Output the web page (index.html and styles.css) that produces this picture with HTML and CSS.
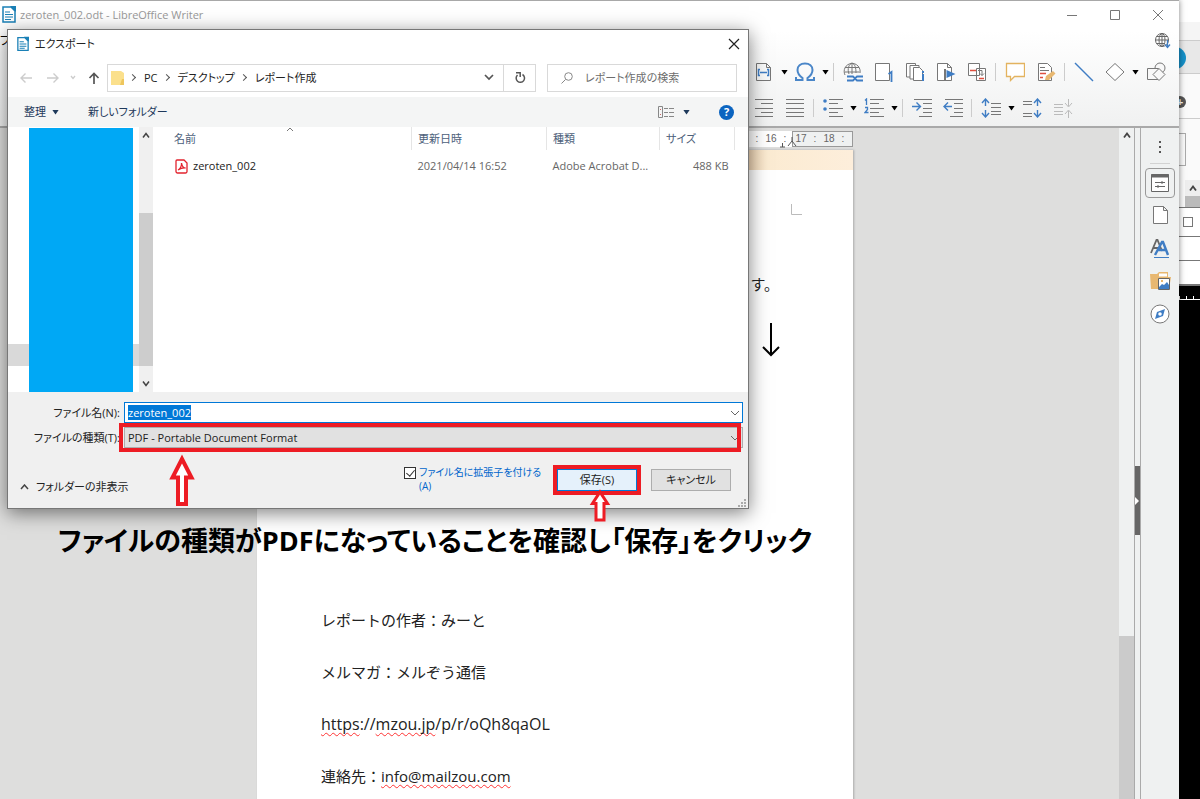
FILE: index.html
```html
<!DOCTYPE html>
<html lang="ja">
  <head>
    <meta charset="utf-8">
    <title>zeroten_002.odt - LibreOffice Writer</title>
    <link rel="stylesheet" href="styles.css">
  </head>
  <body>
    <div class="writer">
      <header class="titlebar">
        <svg class="doc-icon" width="14" height="17" viewBox="0 0 14 17"><path d="M1 1h8l4 4v11H1z" fill="#fff" stroke="#1a80b6" stroke-width="1.5"/><path d="M8 0h6v6z" fill="#1a80b6"/><path d="M3 6h5M3 8.500h8M3 11h8M3 13.500h6" stroke="#1a80b6" stroke-width="1.200"/></svg>
        <span class="titlebar-text">zeroten_002.odt - LibreOffice Writer</span>
        <div class="window-buttons">
          <button aria-label="最小化"><svg width="12" height="12"><path d="M1 6.500h10" stroke="#777"/></svg></button>
          <button aria-label="最大化"><svg width="12" height="12"><path d="M1.500 1.500h9v9h-9z" stroke="#777" fill="none"/></svg></button>
          <button aria-label="閉じる"><svg width="12" height="12"><path d="M1 1l10 10M11 1L1 11" stroke="#777"/></svg></button>
        </div>
      </header>
      <div class="menubar">
        <span class="menu-item">フ</span>
        <button class="tool" aria-label="更新"><svg width="20" height="20" viewBox="0 0 20 20" fill="none" stroke="#666"><circle cx="9" cy="9" r="6.500"/><ellipse cx="9" cy="9" rx="3" ry="6.500"/><path d="M2.500 9h13M9 2.500v13M3.500 5.500h11M3.500 12.500h8"/><path d="M14.500 9v7M12 13.500l2.500 3 2.500-3" stroke="#3f7dc4" stroke-width="1.300"/></svg></button>
      </div>
      <div class="toolbar">
        <button class="tool" aria-label="フィールド"><svg width="20" height="20" viewBox="0 0 20 20" fill="none" stroke="#777"><path d="M2.500 1.500h10l4 4v13h-14zM12.500 1.500v4h4"/><path d="M6 7.500H4.500v6H6M13 7.500h1.500v6H13M6 10.500h7" stroke="#3f7dc4" stroke-width="1.500"/></svg></button>
        <i class="caret"></i>
        <button class="tool" aria-label="特殊文字"><svg width="20" height="20" viewBox="0 0 20 20" fill="none"><path d="M1 15v3h6.500v-2C4 13.500 2.500 11 2.500 8c0-4 3-6.500 7.500-6.500S17.500 4 17.500 8c0 3-1.500 5.500-5 8v2H19v-3" stroke="#4a86c8" stroke-width="2"/></svg></button>
        <i class="caret"></i>
        <i class="sep"></i>
        <button class="tool" aria-label="ハイパーリンク"><svg width="20" height="20" viewBox="0 0 20 20" fill="none" stroke="#777"><path d="M2 13A8 8 0 1 1 17 11M6 12C4 7 6 2 9 1c3 1 4 5 4 10M9 1v11M2 5.500h14M1.500 10h15"/><path d="M4 14.500h6l4 4h6M4 18.500h6l4-4h6" stroke="#3f7dc4" stroke-width="1.800"/></svg></button>
        <button class="tool" aria-label="脚注"><svg width="20" height="20" viewBox="0 0 20 20" fill="none" stroke="#777"><path d="M1.500 1.500h14v17h-14z" fill="#fff"/><path d="M14.500 12l3-2v10" stroke="#3f7dc4" stroke-width="1.800"/></svg></button>
        <button class="tool" aria-label="文末脚注"><svg width="20" height="20" viewBox="0 0 20 20" fill="none" stroke="#777"><path d="M5 15H1.500V1.500h9V4M8 17H5V3.500h9V6" fill="#fff"/><path d="M8.500 5.500h6l3 3v10h-9z" fill="#fff"/><path d="M18 12v7M18 9v2" stroke="#3f7dc4" stroke-width="2"/></svg></button>
        <button class="tool" aria-label="ブックマーク"><svg width="20" height="20" viewBox="0 0 20 20" fill="none" stroke="#777"><path d="M1.500 1.500h10l4 4v13h-14zM11.500 1.500v4h4" fill="#fff"/><path d="M9 7v12" stroke-width="2"/><path d="M10.500 8v8l9-4z" fill="#3f7dc4" stroke="none"/></svg></button>
        <button class="tool" aria-label="相互参照"><svg width="20" height="20" viewBox="0 0 20 20" fill="none" stroke="#777"><path d="M1.500 1.500h11v12h-11zM9.500 6.500h9v12h-9z" fill="#fff"/><path d="M3 8.500h6M12 16.500h5" stroke="#e05040" stroke-width="1.500"/><path d="M11 8.500h4v5M13 11.500l2 2 2-2"/></svg></button>
        <i class="sep"></i>
        <button class="tool" aria-label="コメント"><svg width="20" height="20" viewBox="0 0 20 20"><path d="M1.500 1.500h18v13H9.500L5.500 18.500v-4h-4z" fill="#fff" stroke="#e3b35f" stroke-width="1.300"/></svg></button>
        <button class="tool" aria-label="変更の記録"><svg width="20" height="20" viewBox="0 0 20 20" fill="none" stroke="#777"><path d="M2.500 1.500h9l4 4v13h-13z" fill="#fff"/><path d="M4 5.500h5M4 8.500h9"/><path d="M4 11.500h6M4 15.500h3" stroke="#e05040" stroke-width="1.500"/><path d="M9 18l1-4 7-5 2.500 2.500L13 18z" fill="#e8b871" stroke="none"/></svg></button>
        <i class="sep"></i>
        <button class="tool" aria-label="線"><svg width="20" height="20" viewBox="0 0 20 20"><path d="M1 1l18 18" stroke="#3f7dc4" stroke-width="1.400"/></svg></button>
        <button class="tool" aria-label="図形"><svg width="20" height="20" viewBox="0 0 20 20"><path d="M10 1.500l9 8.500-9 8.500L1 10z" fill="#fff" stroke="#777"/></svg></button>
        <i class="caret"></i>
        <button class="tool" aria-label="図形描画"><svg width="20" height="20" viewBox="0 0 20 20" fill="#f8f8f8" stroke="#777"><circle cx="14" cy="6" r="5"/><path d="M1.500 6.500h11v11h-11z"/><path d="M13 6.500l6 6-6 6-6-6z"/></svg></button>
      </div>
      <div class="toolbar toolbar-format">
        <button class="tool" aria-label="右揃え"><svg width="20" height="20"><path d="M1 1.500h18M7 5.500h12M1 10.500h18M7 14.500h12M1 18.500h18" stroke="#777"/></svg></button>
        <button class="tool" aria-label="両端揃え"><svg width="20" height="20"><path d="M1 1.500h18M1 5.500h18M1 10.500h18M1 14.500h18M1 18.500h18" stroke="#777"/></svg></button>
        <i class="sep"></i>
        <button class="tool" aria-label="箇条書き"><svg width="20" height="20"><path d="M6 1.500h14M6 5.500h9M6 10.500h14M6 14.500h9M6 18.500h14" stroke="#777"/><circle cx="2" cy="3" r="1.800" fill="#3f7dc4"/><circle cx="2" cy="11" r="1.800" fill="#3f7dc4"/></svg></button>
        <i class="caret"></i>
        <button class="tool" aria-label="番号付け"><svg width="20" height="20"><path d="M6 1.500h14M6 5.500h9M6 10.500h14M6 14.500h9M6 18.500h14" stroke="#777"/><path d="M1 2.500L2.500 1v6M1 9.500h2.500v2L1 14.500h3.500" fill="none" stroke="#3f7dc4" stroke-width="1.300"/></svg></button>
        <i class="caret"></i>
        <i class="sep"></i>
        <button class="tool" aria-label="インデントを増やす"><svg width="20" height="20"><path d="M2 1.500h18M11 5.500h9M11 10.500h9M11 14.500h9M7 18.500h13" stroke="#777"/><path d="M0 8.500h8M4.500 4.500l4 4-4 4" fill="none" stroke="#3f7dc4" stroke-width="1.400"/></svg></button>
        <button class="tool" aria-label="インデントを減らす"><svg width="20" height="20"><path d="M2 1.500h18M11 5.500h9M11 10.500h9M11 14.500h9M7 18.500h13" stroke="#777"/><path d="M9 8.500H1M5 4.500l-4 4 4 4" fill="none" stroke="#3f7dc4" stroke-width="1.400"/></svg></button>
        <i class="sep"></i>
        <button class="tool" aria-label="行間"><svg width="20" height="20"><path d="M10 5.500h10M10 9.500h10M10 13.500h10M10 16.500h10" stroke="#777"/><path d="M4.500 8V1M1 5l3.500-4L8 5M4.500 12v7M1 15l3.500 4L8 15" fill="none" stroke="#3f7dc4" stroke-width="1.400"/></svg></button>
        <i class="caret"></i>
        <button class="tool" aria-label="段落間隔を増やす"><svg width="20" height="20"><path d="M1 3.500h9M1 6.500h9M1 15.500h9M1 18.500h9" stroke="#777"/><path d="M15.500 8V1M12 5l3.500-4L19 5M15.500 12v7M12 15l3.500 4 3.500-4" fill="none" stroke="#3f7dc4" stroke-width="1.400"/></svg></button>
        <button class="tool" aria-label="段落間隔を減らす"><svg width="20" height="20"><path d="M1 6.500h9M1 9.500h9M1 13.500h9M1 16.500h9M15.500 1v7M12 5l3.500 4L19 5M15.500 20v-7M12 16l3.500-4 3.500 4" fill="none" stroke="#bbb"/></svg></button>
      </div>

      <main class="workspace">
        <div class="canvas">
          <div class="ruler">
            <div class="ruler-body"><span>:</span><span>16</span><span>:</span></div>
            <div class="ruler-margin"><span>17</span><span>:</span><span>18</span><span>:</span></div>
            <svg class="ruler-mark" width="18" height="12" viewBox="0 0 18 12"><path d="M3.500 7v4M1 11h5M9 10l4-5 4 5M13 5V1" fill="none" stroke="#555"/></svg>
          </div>
          <article class="page">
            <div class="page-banner"></div>
            <svg class="page-corner" width="12" height="12"><path d="M.5 0v10.500H11" fill="none" stroke="#bbb"/></svg>
            <p class="page-end">す。</p>
            <svg class="page-arrow" width="20" height="36" viewBox="0 0 20 36"><path d="M10 1v32M2 25l8 8 8-8" fill="none" stroke="#000" stroke-width="2"/></svg>
            <div class="page-text">
              <p>レポートの作者：みーと</p>
              <p>メルマガ：メルぞう通信</p>
              <p class="page-url"><span class="typo">https</span>://<span class="typo">mzou.jp</span>/p/r/oQh8qaOL</p>
              <p>連絡先：<span class="typo">info@mailzou.com</span></p>
            </div>
          </article>
        </div>
        <div class="scrollbar">
          <svg width="8" height="7"><path d="M1 5.500l3-4 3 4" fill="none" stroke="#444" stroke-width="1.800"/></svg>
          <div class="scrollbar-thumb"></div>
        </div>
        <div class="splitter"><div class="splitter-handle"></div></div>
        <nav class="sidebar">
          <button class="side-menu" aria-label="メニュー"><svg width="4" height="14" fill="#555"><path d="M1 1h2v2H1zM1 6h2v2H1zM1 11h2v2H1z"/></svg></button>
          <button class="side-btn active" aria-label="プロパティ"><svg width="20" height="20" viewBox="0 0 20 20" fill="none" stroke="#666"><path d="M1.500 1.500h17v17h-17z" fill="#fff"/><path d="M1 3h18" stroke-width="3"/><path d="M5 9.500h10M5 13.500h10M12 8v3M8 12v3"/></svg></button>
          <button class="side-btn" aria-label="ページ"><svg width="20" height="20" viewBox="0 0 20 20"><path d="M3.500 1.500h10l4 4v13h-14zM13.500 1.500v4h4" fill="#fff" stroke="#777"/></svg></button>
          <button class="side-btn" aria-label="スタイル"><svg width="20" height="20" viewBox="0 0 20 20" fill="none"><path d="M1 15L6.500 2h1L12 13M3 10h7" stroke="#666" stroke-width="1.800"/><path d="M5 17L12 4h1l5 13M8 12h8" stroke="#3f7dc4" stroke-width="2.400"/><path d="M4 19.500h15" stroke="#3f7dc4"/></svg></button>
          <button class="side-btn" aria-label="ギャラリー"><svg width="22" height="20" viewBox="0 0 22 20"><path d="M1 3h7l2-2h9v5h3l-2 12H2z" fill="#e8b871"/><path d="M10 2.500h8v3h-8z" fill="#fff"/><path d="M9.500 7.500h11v11h-11z" fill="#fff" stroke="#666"/><path d="M10 16l3-3 2 1 3-3 2 3v4H10z" fill="#3f7dc4"/><circle cx="13" cy="10" r="1" fill="#e3a040"/></svg></button>
          <button class="side-btn" aria-label="ナビゲーター"><svg width="20" height="20" viewBox="0 0 20 20"><circle cx="10" cy="10" r="9" fill="#fff" stroke="#777"/><path d="M15 5l-2 7-8 3 2-7z" fill="#3f7dc4"/><circle cx="10" cy="10" r="1.800" fill="#fff"/></svg></button>
        </nav>
      </main>

      <form class="dialog" role="dialog" aria-label="エクスポート">
        <div class="dialog-title">
          <svg class="doc-icon" width="12" height="16" viewBox="0 0 14 17"><path d="M1 1h8l4 4v11H1z" fill="#fff" stroke="#1a80b6" stroke-width="1.500"/><path d="M8 0h6v6z" fill="#1a80b6"/><path d="M3 6h5M3 8.500h8M3 11h8M3 13.500h6" stroke="#1a80b6" stroke-width="1.200"/></svg>
          <span>エクスポート</span>
          <button type="button" class="dialog-close" aria-label="閉じる"><svg width="12" height="12"><path d="M1 1l10 10M11 1L1 11" stroke="#222" stroke-width="1.200"/></svg></button>
        </div>
        <div class="location">
          <button type="button" aria-label="戻る"><svg width="12" height="12"><path d="M12 6H1M5.500 1.500L1 6l4.500 4.500" fill="none" stroke="#ccc" stroke-width="1.400"/></svg></button>
          <button type="button" aria-label="進む"><svg width="12" height="12"><path d="M0 6h11M6.500 1.500L11 6l-4.500 4.500" fill="none" stroke="#ccc" stroke-width="1.400"/></svg></button>
          <button type="button" class="history" aria-label="履歴"><svg width="6" height="5"><path d="M1 1l2 2.500L5 1" fill="none" stroke="#ccc" stroke-width="1.300"/></svg></button>
          <button type="button" aria-label="上へ"><svg width="12" height="12"><path d="M6 12V1.500M1.500 6L6 1.500 10.500 6" fill="none" stroke="#555" stroke-width="1.700"/></svg></button>
          <div class="address">
            <svg width="13" height="16"><path d="M0 1h10l3 2v12H0z" fill="#fbe08c"/><path d="M11 9h2v6h-4z" fill="#eec65d"/></svg>
            <i class="crumb-arrow"></i><a href="#">PC</a>
            <i class="crumb-arrow"></i><a href="#">デスクトップ</a>
            <i class="crumb-arrow"></i><a href="#">レポート作成</a>
            <svg class="address-open" width="10" height="7"><path d="M1 1l4 4 4-4" fill="none" stroke="#555" stroke-width="1.700"/></svg>
          </div>
          <button type="button" class="refresh" aria-label="更新"><svg width="12" height="12"><path d="M8.500 2.500A4.200 4.200 0 1 1 3.500 3M2 .8h4.200V5" fill="none" stroke="#555" stroke-width="1.500"/></svg></button>
          <label class="search">
            <svg width="12" height="12"><circle cx="7.500" cy="4.500" r="3.800" fill="none" stroke="#888"/><path d="M4.500 7.500L.5 11.500" stroke="#888"/></svg>
            <input type="search" placeholder="レポート作成の検索">
          </label>
        </div>
        <div class="commands">
          <button type="button">整理<i class="caret"></i></button>
          <button type="button">新しいフォルダー</button>
          <button type="button" class="view-mode" aria-label="表示方法"><svg width="16" height="12" fill="none" stroke="#888"><path d="M.5.5h4v11h-4zM6 2.500h4M11 2.500h5M6 6.500h4M11 6.500h5M6 10.500h4M11 10.500h5"/><path d="M2 3.500h1M2 8.500h1" stroke="#c66"/></svg><i class="caret"></i></button>
          <button type="button" class="help" aria-label="ヘルプ">?</button>
        </div>
        <div class="browser">
          <div class="tree">
            <div class="tree-selected"></div>
            <div class="tree-cover"></div>
          </div>
          <div class="tree-scroll">
            <svg width="8" height="7"><path d="M1 5.500l3-4 3 4" fill="none" stroke="#444" stroke-width="1.500"/></svg>
            <div class="tree-thumb"></div>
            <svg width="8" height="7"><path d="M1 1.500l3 4 3-4" fill="none" stroke="#444" stroke-width="1.500"/></svg>
          </div>
          <div class="files">
            <svg class="sort-mark" width="8" height="5"><path d="M1 4l3-3 3 3" fill="none" stroke="#777"/></svg>
            <table>
              <colgroup><col><col class="col-date"><col class="col-type"><col class="col-size"></colgroup>
              <thead>
                <tr><th>名前</th><th>更新日時</th><th>種類</th><th>サイズ</th></tr>
              </thead>
              <tbody>
                <tr>
                  <td class="file-name"><svg width="13" height="15" viewBox="0 0 13 15"><path d="M2 1h7l3 3v8.500a1.500 1.500 0 0 1-1.500 1.500h-8A1.500 1.500 0 0 1 1 12.500V2a1 1 0 0 1 1-1z" fill="#fff" stroke="#e2232e" stroke-width="1.300"/><path d="M3 11c2-1 4-4 3.500-7 .5 3 2 5 4 5-3-.5-5 .5-7.500 2z" fill="none" stroke="#e2232e" stroke-width="1.300"/></svg>zeroten_002</td>
                  <td>2021/04/14 16:52</td>
                  <td>Adobe Acrobat D...</td>
                  <td class="file-size">488 KB</td>
                </tr>
              </tbody>
            </table>
          </div>
        </div>
        <div class="dialog-fields">
          <label for="name">ファイル名(N):</label>
          <div class="field">
            <input id="name" type="text" value="zeroten_002">
            <svg width="10" height="6"><path d="M1 1l4 4 4-4" fill="none" stroke="#666"/></svg>
          </div>
          <label for="type">ファイルの種類(T):</label>
          <div class="field">
            <select id="type"><option>PDF - Portable Document Format</option></select>
            <svg width="10" height="6"><path d="M1 1l4 4 4-4" fill="none" stroke="#666"/></svg>
            <div class="mark mark-type"></div>
            <svg class="arrow arrow-type" width="28" height="52" viewBox="0 0 28 52"><path d="M14 5l9.500 18.500h-5.500V50h-8V23.500H4.500z" fill="#fff" stroke="#ed1c24" stroke-width="4"/></svg>
          </div>
        </div>
        <div class="dialog-actions">
          <button type="button" class="hide-folders"><svg width="9" height="6"><path d="M1 5l3.500-4L8 5" fill="none" stroke="#444" stroke-width="1.500"/></svg>フォルダーの非表示</button>
          <div class="extension">
            <input id="ext" type="checkbox" checked>
            <label for="ext">ファイル名に拡張子を付ける<br>(A)</label>
          </div>
          <div class="save-wrap">
            <button type="submit" class="push save">保存(S)</button>
            <div class="mark mark-save"></div>
            <svg class="arrow arrow-save" width="24" height="34" viewBox="0 0 24 34"><path d="M12 4l7.500 11.500h-3.500V32H8V15.500H4.500z" fill="#fff" stroke="#ed1c24" stroke-width="3"/></svg>
          </div>
          <button type="button" class="push">キャンセル</button>
          <svg class="grip" width="8" height="8" fill="#aaa"><path d="M6 0h2v2H6zM3 3h2v2H3zM6 3h2v2H6zM0 6h2v2H0zM3 6h2v2H3zM6 6h2v2H6z"/></svg>
        </div>
      </form>
      <p class="caption">ファイルの種類がPDFになっていることを確認し「保存」をクリック</p>
    </div>

    <aside class="behind">
      <div class="behind-tabs"></div>
      <div class="behind-tab"><i class="avatar"></i></div>
      <div class="behind-bar"><i class="plus">+</i></div>
      <div class="behind-page"><i class="behind-card"></i></div>
      <div class="behind-scroll"><svg width="8" height="7"><path d="M1 5.500l3-4 3 4" fill="none" stroke="#444" stroke-width="1.800"/></svg></div>
      <div class="behind-thumb"></div>
      <div class="behind-row"><i class="restore"></i></div>
      <div class="behind-row short"></div>
      <div class="behind-row short"></div>
      <div class="timeline"></div>
    </aside>
    <script src="script.js"></script>
  </body>
</html>
```
FILE: styles.css
```css
* {
  box-sizing: border-box;
}
body {
  margin: 0;
  display: flex;
  height: 100vh;
  overflow: hidden;
  background: #000;
  font: 12px/16px "Open Sans", "Noto Sans CJK JP", sans-serif;
  font-feature-settings: "palt";
}
p {
  margin: 0;
}
button {
  display: flex;
  align-items: center;
  justify-content: center;
  padding: 0;
  border: 0;
  background: none;
  font: inherit;
  color: inherit;
}
svg {
  display: block;
  flex: none;
}

/* writer window */
.writer {
  position: relative;
  z-index: 1;
  flex: 1;
  min-width: 0;
  display: flex;
  flex-direction: column;
  border-top: 1px solid #a8a8a8;
  background: linear-gradient(#fff 30px, #f0f1f1 126px);
  box-shadow: 0 0 6px rgba(0, 0, 0, .5);
}
.titlebar {
  display: flex;
  align-items: center;
  height: 27px;
  padding-left: 2px;
  gap: 4px;
}
.titlebar-text {
  font-size: 11px;
  color: #999;
}
.window-buttons {
  display: flex;
  margin-left: auto;
}
.window-buttons button {
  width: 43px;
}
.menubar {
  display: flex;
  justify-content: space-between;
  align-items: center;
  height: 26px;
  padding-right: 1px;
}
.menu-item {
  width: 7px;
  overflow: hidden;
}
.toolbar {
  display: flex;
  justify-content: flex-end;
  align-items: center;
  height: 36px;
  padding-right: 8px;
}
.toolbar-format {
  padding-right: 101px;
}
.tool {
  width: 31px;
}
.caret {
  width: 10px;
  height: 5px;
  background: #000;
  clip-path: polygon(20% 0, 90% 0, 55% 100%);
}
.sep {
  width: 7px;
  height: 18px;
  background: linear-gradient(#ccc, #ccc) center / 1px 100% no-repeat;
}

.workspace {
  flex: 1;
  min-height: 0;
  display: flex;
  border-top: 2px solid #a9a9a9;
  background: #dededd;
}
.canvas {
  flex: 1;
  display: flex;
  flex-direction: column;
  align-items: center;
  padding-right: 9px;
}
.ruler {
  position: relative;
  display: flex;
  justify-content: flex-end;
  width: 596px;
  height: 16px;
  margin: 3px 0;
  background: #fff;
  font: 10px/14px "Liberation Sans", sans-serif;
  color: #666;
}
.ruler span {
  width: 14px;
  text-align: center;
}
.ruler-body {
  display: flex;
  padding-top: 1px;
}
.ruler-margin {
  display: flex;
  width: 61px;
  padding-left: 1px;
  border: 1px solid #999;
  background: #eff1f1;
}
.ruler-mark {
  position: absolute;
  right: 56px;
  bottom: -1px;
}
.page {
  flex: 1;
  width: 596px;
  background: #fff;
  box-shadow: 1px 0 2px #aaa;
  font-size: 15px;
  color: #222;
}
.page-banner {
  height: 20px;
  background: linear-gradient(90deg, #e9c8a2 480px, #fbebd2 510px, #fdeedb);
}
.page-corner {
  margin: 34px 50px 0 auto;
}
.page-end {
  padding-right: 74px;
  margin-top: 56px;
  line-height: 24px;
  text-align: right;
  font-feature-settings: normal;
}
.page-arrow {
  margin: 26px 72px 0 auto;
}
.page-text {
  padding: 236px 64px 0;
  font-feature-settings: normal;
  line-height: 52px;
}
.page-url {
  font-size: 16px;
}
.typo {
  text-decoration: underline wavy #f33 1px;
  text-decoration-skip-ink: none;
  text-underline-offset: 2px;
}

.scrollbar {
  width: 15px;
  display: flex;
  flex-direction: column;
  align-items: center;
  padding-top: 4px;
  background: #eff1f1;
}
.scrollbar-thumb {
  width: 100%;
  flex: 1;
  margin-top: 497px;
  background: #cbcbcb;
}
.splitter {
  display: flex;
  align-items: center;
  width: 7px;
  border-left: 1px solid #aaa;
  border-right: 1px solid #aaa;
  background: #eff1f1;
}
.splitter-handle {
  position: relative;
  width: 5px;
  height: 69px;
  margin-top: 74px;
  background: #666;
}
.splitter-handle::after {
  content: "";
  position: absolute;
  top: 31px;
  left: 0;
  border: 4px solid transparent;
  border-left-color: #fff;
  border-right: 0;
}
.sidebar {
  width: 38px;
  display: flex;
  flex-direction: column;
  align-items: center;
  padding-top: 2px;
  background: #eff1f1;
}
.side-menu {
  width: 20px;
  height: 34px;
  margin-bottom: 4px;
  border-bottom: 1px solid #d2d2d2;
}
.side-btn {
  width: 30px;
  height: 33px;
}
.side-btn.active {
  height: 30px;
  border: 1px solid #999;
  border-radius: 4px;
}

/* export dialog */
.dialog {
  position: absolute;
  top: 28px;
  left: 7px;
  right: 430px;
  border: 1px solid #777;
  background: #fff;
  box-shadow: 0 4px 18px rgba(0, 0, 0, .5);
  color: #222;
  font-size: 11px;
}
.dialog-title {
  display: flex;
  align-items: center;
  height: 28px;
  padding: 0 8px 0 9px;
  gap: 6px;
}
.dialog-close {
  margin-left: auto;
}
.location {
  display: flex;
  align-items: center;
  height: 39px;
  padding: 0 11px 0 4px;
}
.location button {
  width: 27px;
}
.location .history {
  width: 14px;
}
.location .refresh {
  width: 32px;
  height: 28px;
  border: 1px solid #d9d9d9;
  border-left: 0;
}
.address {
  flex: 1;
  display: flex;
  align-items: center;
  height: 28px;
  padding-left: 3px;
  border: 1px solid #d9d9d9;
}
.address a {
  color: #222;
  text-decoration: none;
}
.address-open {
  margin: 0 9px 0 auto;
}
.crumb-arrow {
  width: 5px;
  height: 5px;
  margin: 0 9px 0 6px;
  border: solid #555;
  border-width: 1px 1px 0 0;
  transform: rotate(45deg);
}
.search {
  display: flex;
  align-items: center;
  gap: 12px;
  width: 190px;
  height: 28px;
  margin-left: 11px;
  padding-left: 13px;
  border: 1px solid #d9d9d9;
}
.search input {
  width: 140px;
  padding: 0;
  border: 0;
  outline: 0;
  font: inherit;
}
.search input::placeholder {
  color: #6d6d6d;
}
.commands {
  display: flex;
  align-items: center;
  height: 30px;
  padding: 0 14px 0 16px;
  gap: 28px;
  background: #f4f5f5;
  color: #1e395b;
}
.commands button {
  gap: 4px;
}
.commands .caret {
  background: #1e395b;
}
.commands .view-mode {
  margin-left: auto;
  gap: 7px;
}
.commands .help {
  width: 15px;
  height: 15px;
  border-radius: 50%;
  background: #0b64c0;
  color: #fff;
  font-weight: bold;
}
.browser {
  display: flex;
  height: 265px;
}
.tree {
  position: relative;
  width: 131px;
}
.tree-selected {
  position: absolute;
  top: 217px;
  left: 0;
  right: 0;
  height: 22px;
  background: #d9d9d9;
}
.tree-cover {
  position: relative;
  height: 265px;
  margin: 1px 6px 0 21px;
  background: #00a8f5;
}
.tree-scroll {
  display: flex;
  flex-direction: column;
  align-items: center;
  width: 14px;
  padding: 5px 0;
  background: #f0f0f0;
}
.tree-thumb {
  width: 100%;
  height: 153px;
  margin: auto 0 14px;
  background: #cdcdcd;
}
.files {
  position: relative;
  flex: 1;
  padding: 0 13px;
}
.sort-mark {
  position: absolute;
  top: 0;
  left: 133px;
}
.files table {
  width: 100%;
  table-layout: fixed;
  border-collapse: collapse;
  color: #666;
}
.col-date {
  width: 135px;
}
.col-type {
  width: 113px;
}
.col-size {
  width: 75px;
}
.files th {
  height: 23px;
  padding: 0 6px;
  border-right: 1px solid #e5e5e5;
  text-align: left;
  font-weight: normal;
  color: #4c607a;
}
.files th:first-child {
  padding-left: 8px;
}
.files td {
  height: 32px;
  padding: 0 6px;
  white-space: nowrap;
}
.files .file-name {
  display: flex;
  align-items: center;
  gap: 5px;
  padding-left: 9px;
  color: #222;
}
.files .file-size {
  text-align: right;
}
.dialog-fields {
  position: relative;
  z-index: 1;
  display: grid;
  grid-template-columns: 112px 1fr;
  align-items: center;
  gap: 4px;
  padding: 10px 5px 0 0;
  background: #f0f0f0;
}
.dialog-fields label {
  text-align: right;
  white-space: nowrap;
}
.field {
  position: relative;
  height: 21px;
}
.field input,
.field select {
  appearance: none;
  display: block;
  width: 100%;
  height: 21px;
  margin: 0;
  padding: 0 3px;
  border: 1px solid #0078d7;
  border-radius: 0;
  outline: 0;
  background: #fff;
  font: inherit;
  color: #222;
}
.field select {
  border-color: #adadad;
  background: #e1e1e1;
}
.field > svg:not(.arrow) {
  position: absolute;
  top: 8px;
  right: 3px;
}
.field input::selection {
  background: #0078d7;
  color: #fff;
}
.dialog-actions {
  position: relative;
  display: flex;
  align-items: flex-start;
  height: 60px;
  padding: 21px 17px 0 12px;
  background: #f0f0f0;
}
.hide-folders {
  gap: 7px;
  margin-top: 10px;
}
.extension {
  display: flex;
  align-items: flex-start;
  width: 140px;
  gap: 3px;
  margin: -4px 8px 0 auto;
  font-size: 10px;
  line-height: 14px;
  white-space: nowrap;
  color: #0066cc;
}
.extension input {
  appearance: none;
  width: 12px;
  height: 12px;
  margin: 2px 0 0;
  border: 1px solid #333;
  background: #fff;
}
.extension input:checked::after {
  content: "";
  display: block;
  width: 4px;
  height: 7px;
  margin: 0 0 0 3px;
  border: solid #333;
  border-width: 0 1px 1px 0;
  transform: rotate(40deg);
}
.save-wrap {
  position: relative;
  margin: 0 14px 0 5px;
}
.push {
  width: 80px;
  height: 22px;
  border: 1px solid #adadad;
  background: #e1e1e1;
}
.push.save {
  border-color: #0078d7;
  background: #e5f1fb;
}
.grip {
  position: absolute;
  right: 2px;
  bottom: 1px;
}

/* red marks */
.mark {
  position: absolute;
  border: 4px solid #ed1c24;
  pointer-events: none;
}
.mark-type {
  top: -4px;
  right: 2px;
  bottom: -4px;
  left: -5px;
}
.mark-save {
  inset: -4px;
}
.arrow {
  position: absolute;
}
.arrow-type {
  top: 27px;
  left: 44px;
}
.arrow-save {
  top: 19px;
  left: 31px;
}
.caption {
  position: absolute;
  top: 520px;
  left: 58px;
  font-size: 27px;
  line-height: 40px;
  font-weight: bold;
  white-space: nowrap;
  color: #000;
}

/* windows behind */
.behind {
  width: 21px;
  display: flex;
  flex-direction: column;
  background: #000;
}
.behind-tabs {
  height: 40px;
  background: linear-gradient(#fff 22px, #f5f5f5 22px);
}
.behind-tab {
  height: 34px;
  border: solid #ccc;
  border-width: 1px 0;
  background: #e8e8e8;
}
.avatar {
  display: block;
  width: 22px;
  height: 22px;
  margin: 6px 0 0 -15px;
  border-radius: 50%;
  background: #1590c8;
}
.behind-bar {
  height: 45px;
  padding-top: 22px;
  border-bottom: 1px solid #ccc;
  background: #fafafa;
}
.plus {
  display: block;
  width: 12px;
  height: 12px;
  margin-left: -5px;
  border-radius: 50%;
  background: #555;
  color: #fff;
  font: bold 11px/12px "Liberation Sans", sans-serif;
  text-align: center;
}
.behind-page {
  height: 61px;
  padding-top: 14px;
  background: #fafafa;
}
.behind-card {
  display: block;
  width: 7px;
  height: 33px;
  border: 1px solid #aaa;
  border-left: 0;
}
.behind-scroll {
  display: flex;
  align-items: center;
  justify-content: center;
  height: 16px;
  border-left: 6px solid #fafafa;
  background: #eee;
}
.behind-thumb {
  height: 11px;
  border-left: 6px solid #fafafa;
  background: #bbb;
}
.behind-row {
  height: 29px;
  padding: 9px 4px;
  border-top: 1px solid #777;
  background: #fff;
}
.behind-row.short {
  height: 24px;
}
.restore {
  display: block;
  width: 10px;
  height: 10px;
  border: 1px solid #777;
}
.timeline {
  height: 16px;
  border-top: 2px solid #777;
  border-bottom: 1px solid #fff;
  background: repeating-linear-gradient(90deg, #fff 0 1px, transparent 1px 7px) bottom / 100% 3px no-repeat;
}
```
FILE: script.js
```js
// the proposed file name starts out selected
document.getElementById('name').select();
```
